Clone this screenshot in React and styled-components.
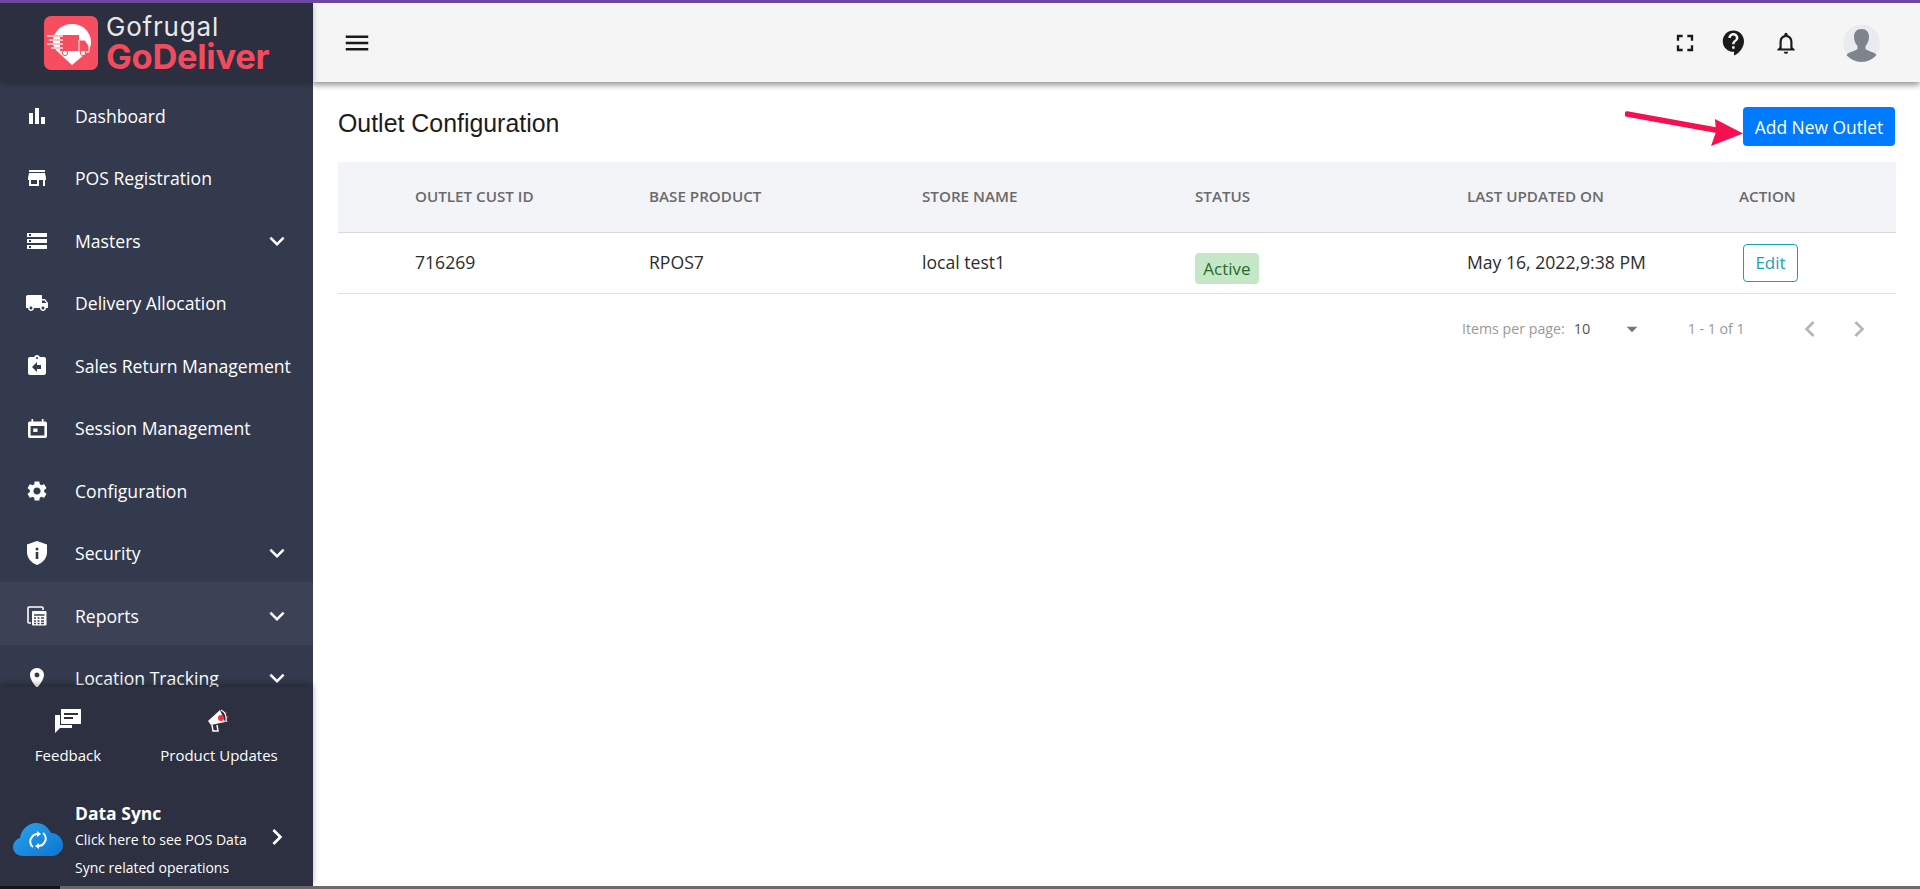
import React from "react";
import styled, { createGlobalStyle } from "styled-components";
import {
  MdBarChart, MdStore, MdStorage, MdLocalShipping, MdAssignmentReturn, MdSettings,
  MdLocationOn, MdKeyboardArrowDown, MdKeyboardArrowRight, MdMenu, MdFullscreen,
  MdContactSupport, MdNotificationsNone, MdChevronLeft, MdChevronRight, MdArrowDropDown,
} from "react-icons/md";

const Global = createGlobalStyle`
  html, body { margin: 0; padding: 0; height: 889px; overflow: hidden; background: #fff; }
  * { box-sizing: border-box; }
  body { font-family: "Open Sans", "Noto Sans", sans-serif; }
`;

const Page = styled.div`
  width: 1920px; height: 889px; display: flex; flex-direction: column; position: relative; overflow: hidden;
`;
const TopLine = styled.div`height: 3px; background: #6e479f; flex: none; position: relative; z-index: 4;`;
const Body = styled.div`flex: 1; display: flex; min-height: 0;`;
const BottomStrip = styled.div`
  height: 3px; flex: none; background: linear-gradient(90deg, #15161a 0 60px, #6b6b6b 60px);
`;

const Sidebar = styled.aside`
  width: 313px; flex: none; display: flex; flex-direction: column; background: #343a4d; position: relative; z-index: 3;
`;
const Brand = styled.div`
  height: 79px; flex: none; background: #2b2f3f; display: flex; align-items: center; gap: 8px;
  padding: 0 0 0 44px; box-shadow: 0 2px 5px rgba(0,0,0,.25); position: relative; z-index: 1;
`;
const BrandText = styled.div`display: flex; flex-direction: column; font-family: Inter, sans-serif; margin-top: 1px;`;
const BrandTop = styled.span`font-size: 26px; line-height: 28px; color: #e8e8ea; font-weight: 400; letter-spacing: .8px;`;
const BrandMain = styled.span`font-size: 34.5px; line-height: 32px; color: #f14c5e; font-weight: 700; letter-spacing: -.3px;`;

const Nav = styled.nav`flex: 1; min-height: 0; overflow: hidden;`;
const NavItem = styled.div`
  height: 62.5px; display: flex; align-items: center; padding: 5px 0 0 25px; color: #fff;
  background: ${p => (p.$active ? "#3c4155" : "transparent")};
  font-size: 17.6px;
`;
const NavIcon = styled.span`width: 24px; height: 24px; display: flex; align-items: center; justify-content: center; flex: none; font-size: 24px;`;
const NavLabel = styled.span`margin-left: 26px; flex: 1; white-space: nowrap;`;
const Caret = styled.span`display: flex; width: 32px; margin-right: 20px; justify-content: center; font-size: 30px;`;

const SideFooter = styled.div`
  height: 199px; flex: none; background: #2c3040; box-shadow: 0 -3px 6px rgba(0,0,0,.3); position: relative;
  color: #fff; display: flex; flex-direction: column;
`;
const Shortcuts = styled.div`display: grid; grid-template-columns: 136px 166px; padding-top: 22px;`;
const Shortcut = styled.div`display: flex; flex-direction: column; align-items: center; font-size: 15px; gap: 12px; line-height: 20px;`;
const SyncRow = styled.div`
  margin-top: 35px; display: grid; grid-template-columns: 50px 1fr 24px; column-gap: 12px; align-items: center;
  padding: 0 20px 0 13px;
`;
const CloudWrap = styled.span`display: flex; margin-top: -2px;`;
const SyncText = styled.div`display: flex; flex-direction: column;`;
const SyncTitle = styled.strong`font-size: 17.5px; line-height: 26px; font-weight: 700;`;
const SyncLine = styled.span`font-size: 14px; line-height: 27.5px; white-space: nowrap;`;
const SyncCaret = styled.span`display: flex; font-size: 32px; margin: -8px 0 0 -8px;`;

const Main = styled.main`flex: 1; min-width: 0; display: flex; flex-direction: column; position: relative;`;
const Header = styled.header`
  height: 79px; flex: none; background: #f5f5f5; box-shadow: 0 3px 6px rgba(0,0,0,.42); display: flex; align-items: center;
  padding: 0 40px 0 29px; position: relative; z-index: 1;
`;
const Burger = styled.span`display: flex; font-size: 30px; color: #1a1a1a;`;
const HeaderTools = styled.div`margin-left: auto; display: flex; align-items: center;`;
const Tool = styled.span`display: flex; font-size: ${p => p.$size || 26}px; color: #1a1a1a; margin-right: ${p => p.$gap || 0}px;`;

const Content = styled.div`padding: 25px 24px 0 25px; position: relative;`;
const TitleRow = styled.div`display: flex; justify-content: space-between; align-items: flex-start; height: 55px;`;
const Title = styled.h1`
  margin: -2px 0 0; font: 400 24.9px/36px "Liberation Sans", Arial, sans-serif; color: #1c1c1c;
`;
const AddBtn = styled.button`
  width: 152px; height: 39px; margin-right: 1px; border: 0; border-radius: 4px; background: #007bff; color: #fff; font: 400 17.4px "Open Sans", sans-serif; padding: 0;
`;
const Arrow = styled.svg`position: absolute; left: 1312px; top: 28px; width: 120px; height: 40px;`;

const Row = styled.div`
  display: grid; grid-template-columns: 77px 234px 273px 273px 272px 272px 1fr; align-items: center;
`;
const HeadRow = styled(Row)`
  height: 71px; background: #f3f4f8; border-bottom: 1px solid #d6d8de; color: #6a6a6a; font-size: 15.2px; font-weight: 600;
  padding-bottom: 2px;
`;
const DataRow = styled(Row)`
  height: 61px; border-bottom: 1px solid #dfe0e3; color: #2c2c2c; font-size: 17.6px; padding-bottom: 2px;
`;
const Badge = styled.span`
  display: inline-flex; align-items: center; justify-content: center; width: 64px; height: 31px; margin-top: 12px;
  background: #c5e7c8; color: #256b2a; border-radius: 4px; font-size: 17px;
`;
const EditBtn = styled.button`
  width: 55px; height: 38px; margin: 1px 0 0 4px; border: 1px solid #17a2b8; border-radius: 4px; background: #fff; color: #17a2b8;
  font: 400 17px "Open Sans", sans-serif; padding: 0;
`;
const Pager = styled.div`
  height: 73px; display: flex; align-items: center; color: #999; font-size: 14.2px; padding-left: 1124px; padding-bottom: 4px;
`;
const PerPage = styled.span`color: #555; margin-left: 9px; font-size: 14.5px; width: 34px;`;
const PagerCaret = styled.span`display: flex; font-size: 26px; color: #757575; margin-right: 43px; margin-left: 11px;`;
const Range = styled.span`width: 56px; white-space: nowrap; font-size: 14.2px;`;
const PagerNav = styled.span`display: flex; font-size: 32px; color: #b5b5b5; margin-left: ${p => p.$ml}px;`;

const Logo = () => (
  <svg width="54" height="54" viewBox="0 0 54 54">
    <rect width="54" height="54" rx="7" fill="#f74d60" />
    <path d="M28 8c11 0 19 8 19 18 0 6-3 9-6 12l-13 11-12-11c-3-3-7-6-7-12C9 16 17 8 28 8z" fill="#fff" />
    <path d="M16 19h19v16H16z" fill="#f74d60" />
    <path d="M35 24h6l4 6v6H35z" fill="#f74d60" stroke="#fff" strokeWidth="1" />
    <path d="M4 20h14M6 24h12M4 28h14M8 32h10" stroke="#fff" strokeWidth="2" strokeLinecap="round" />
    <path d="M4 20h14M6 24h12M4 28h14M8 32h10" stroke="#f74d60" strokeWidth=".7" strokeLinecap="round" />
    <circle cx="21" cy="37" r="2.6" fill="#fff" stroke="#f74d60" />
    <circle cx="39" cy="37" r="2.6" fill="#fff" stroke="#f74d60" />
  </svg>
);
const Calendar = () => (
  <svg width="19" height="21" viewBox="0 0 22 24" fill="#fff">
    <path d="M4 1h2v3h10V1h2v3h2a2 2 0 0 1 2 2v15a2 2 0 0 1-2 2H2a2 2 0 0 1-2-2V6a2 2 0 0 1 2-2h2zM3 9v11h16V9z" />
    <rect x="6" y="12" width="5" height="4" />
  </svg>
);
const Shield = () => (
  <svg width="20" height="24" viewBox="0 0 20 24">
    <path d="M10 0l10 3.500v7.500c0 6-4.200 11-10 13C4.200 22 0 17 0 11V3.500z" fill="#fff" />
    <circle cx="10" cy="8" r="1.500" fill="#343a4d" />
    <rect x="8.700" y="11" width="2.600" height="7" fill="#343a4d" />
  </svg>
);
const ReportsIcon = () => (
  <svg width="20" height="20" viewBox="0 0 20 20" fill="none" stroke="#fff" strokeWidth="1.600">
    <path d="M4 17H2a1 1 0 0 1-1-1V2a1 1 0 0 1 1-1h13a1 1 0 0 1 1 1v2" />
    <rect x="5" y="5" width="14.500" height="14.500" rx="1" fill="#fff" stroke="none" />
    <path d="M7 9h10.500M7 12h2M10.500 12h2M14 12h3M7 15h2M10.500 15h2M14 15h3M7 17.500h2M10.500 17.500h2M14 17.500h3" stroke="#3c4155" strokeWidth="1.500" />
  </svg>
);
const FeedbackIcon = () => (
  <svg width="26" height="24" viewBox="0 0 26 24" fill="#fff">
    <path d="M0 6h5v10h12v3H5l-5 5z" />
    <path d="M6 0h20v15H6z" />
    <path d="M9 4h14v2H9zM9 8h9v2H9z" fill="#2c3040" />
  </svg>
);
const MegaIcon = () => (
  <svg width="24" height="24" viewBox="0 0 24 24">
    <path d="M13 1L1 12l3 4 14-3z" fill="#fff" />
    <path d="M5 16l1 6h5l-1-6" fill="none" stroke="#fff" strokeWidth="1.500" />
    <circle cx="14" cy="9" r="3" fill="#f0343c" />
    <path d="M17 5l3-2M18 8h4M18 11l3 2" stroke="#f0343c" strokeWidth="1" />
    <path d="M14 1c4 2 6 6 5 12" fill="none" stroke="#fff" strokeWidth="1.200" />
  </svg>
);
const Cloud = () => (
  <svg width="50" height="33" viewBox="0 0 50 33">
    <defs><linearGradient id="cl" x1="0" y1="0" x2="1" y2="1"><stop offset="0" stopColor="#2aa4ee" /><stop offset="1" stopColor="#0e74cf" /></linearGradient></defs>
    <path d="M10 33C4 33 0 29 0 24c0-4 3-8 7-9 1-8 8-15 16-15 7 0 12 4 15 10 7 0 12 6 12 12 0 6-5 11-11 11z" fill="url(#cl)" />
    <path d="M20 24c-3-2-4-7-1-10 1-2 3-3 6-3M30 10c3 2 4 7 1 10-1 2-3 3-6 3" fill="none" stroke="#fff" strokeWidth="2" />
    <path d="M24 8l4 3-4 3zM26 20l-4 3 4 3z" fill="#fff" />
  </svg>
);
const Avatar = () => (
  <svg width="37" height="38" viewBox="0 0 37 38">
    <circle cx="18.500" cy="19" r="18.500" fill="#e9ebef" />
    <path d="M18.500 5c5 0 7.500 3.500 7.500 8 0 3.500-1.500 7-3.500 9v3c2 2 9 3 11 6-3.500 4-9 7-15 7s-11.500-3-15-7c2-3 9-4 11-6v-3c-2-2-3.500-5.500-3.500-9 0-4.500 2.500-8 7.500-8z" fill="#7d848b" />
  </svg>
);

const items = [
  { label: "Dashboard", icon: <MdBarChart /> },
  { label: "POS Registration", icon: <MdStore /> },
  { label: "Masters", icon: <MdStorage />, caret: true },
  { label: "Delivery Allocation", icon: <MdLocalShipping /> },
  { label: "Sales Return Management", icon: <MdAssignmentReturn /> },
  { label: "Session Management", icon: <Calendar /> },
  { label: "Configuration", icon: <MdSettings /> },
  { label: "Security", icon: <Shield />, caret: true },
  { label: "Reports", icon: <ReportsIcon />, caret: true, active: true },
  { label: "Location Tracking", icon: <MdLocationOn />, caret: true },
];

export default function App() {
  return (
    <Page>
      <Global />
      <TopLine />
      <Body>
        <Sidebar>
          <Brand>
            <Logo />
            <BrandText>
              <BrandTop>Gofrugal</BrandTop>
              <BrandMain>GoDeliver</BrandMain>
            </BrandText>
          </Brand>
          <Nav>
            {items.map(it => (
              <NavItem key={it.label} $active={it.active}>
                <NavIcon>{it.icon}</NavIcon>
                <NavLabel>{it.label}</NavLabel>
                {it.caret && <Caret><MdKeyboardArrowDown /></Caret>}
              </NavItem>
            ))}
          </Nav>
          <SideFooter>
            <Shortcuts>
              <Shortcut><FeedbackIcon />Feedback</Shortcut>
              <Shortcut><MegaIcon />Product Updates</Shortcut>
            </Shortcuts>
            <SyncRow>
              <CloudWrap><Cloud /></CloudWrap>
              <SyncText>
                <SyncTitle>Data Sync</SyncTitle>
                <SyncLine>Click here to see POS Data</SyncLine>
                <SyncLine>Sync related operations</SyncLine>
              </SyncText>
              <SyncCaret><MdKeyboardArrowRight /></SyncCaret>
            </SyncRow>
          </SideFooter>
        </Sidebar>
        <Main>
          <Header>
            <Burger><MdMenu /></Burger>
            <HeaderTools>
              <Tool $size={28} $gap={20}><MdFullscreen /></Tool>
              <Tool $size={30} $gap={24}><MdContactSupport /></Tool>
              <Tool $size={26} $gap={44}><MdNotificationsNone /></Tool>
              <Avatar />
            </HeaderTools>
          </Header>
          <Content>
            <TitleRow>
              <Title>Outlet Configuration</Title>
              <AddBtn>Add New Outlet</AddBtn>
            </TitleRow>
            <Arrow viewBox="0 0 120 40">
              <path d="M2 4L96 21" stroke="#f5104f" strokeWidth="5.500" strokeLinecap="round" fill="none" />
              <path d="M118 23.500L86 36l5-14-1-13z" fill="#f5104f" />
            </Arrow>
            <HeadRow>
              <span />
              <span>OUTLET CUST ID</span>
              <span>BASE PRODUCT</span>
              <span>STORE NAME</span>
              <span>STATUS</span>
              <span>LAST UPDATED ON</span>
              <span>ACTION</span>
            </HeadRow>
            <DataRow>
              <span />
              <span>716269</span>
              <span>RPOS7</span>
              <span>local test1</span>
              <span><Badge>Active</Badge></span>
              <span>May 16, 2022,9:38 PM</span>
              <span><EditBtn>Edit</EditBtn></span>
            </DataRow>
            <Pager>
              <span>Items per page:</span>
              <PerPage>10</PerPage>
              <PagerCaret><MdArrowDropDown /></PagerCaret>
              <Range>1 - 1 of 1</Range>
              <PagerNav $ml={50}><MdChevronLeft /></PagerNav>
              <PagerNav $ml={17}><MdChevronRight /></PagerNav>
            </Pager>
          </Content>
        </Main>
      </Body>
      <BottomStrip />
    </Page>
  );
}
